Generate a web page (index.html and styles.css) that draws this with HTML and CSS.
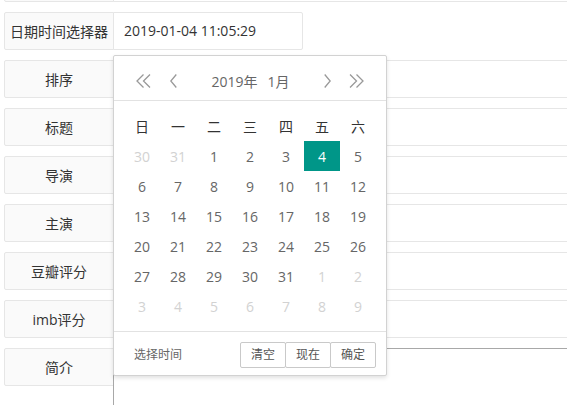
FILE: index.html
```html
<!DOCTYPE html>
<html lang="zh-CN">
<head>
<meta charset="utf-8">
<title>表单</title>
<link rel="stylesheet" href="styles.css">
</head>
<body>
<form class="form">
  <div class="item item-cut">
    <div class="label"></div>
    <div class="field field-wide"></div>
  </div>
  <div class="item">
    <div class="label">日期时间选择器</div>
    <div class="field field-date">2019-01-04 11:05:29
      <div class="picker">
        <div class="picker-head">
          <svg class="ico ico-dbl" width="17" height="14" viewBox="0 0 17 14"><polyline points="8.5,0.5 2,7 8.5,13.5"/><polyline points="15,0.5 8.5,7 15,13.5"/></svg>
          <svg class="ico ico-one" width="7" height="14" viewBox="0 0 7 14"><polyline points="6.3,0.5 0.8,7 6.3,13.5"/></svg>
          <div class="ym"><span>2019年</span><span>1月</span></div>
          <svg class="ico ico-one" width="7" height="14" viewBox="0 0 7 14"><polyline points="0.7,0.5 6.2,7 0.7,13.5"/></svg>
          <svg class="ico ico-dbl" width="17" height="14" viewBox="0 0 17 14"><polyline points="2,0.5 8.5,7 2,13.5"/><polyline points="8.5,0.5 15,7 8.5,13.5"/></svg>
        </div>
        <div class="picker-body">
          <div class="wk">日</div><div class="wk">一</div><div class="wk">二</div><div class="wk">三</div><div class="wk">四</div><div class="wk">五</div><div class="wk">六</div>
          <div class="d off">30</div><div class="d off">31</div><div class="d">1</div><div class="d">2</div><div class="d">3</div><div class="d on">4</div><div class="d">5</div>
          <div class="d">6</div><div class="d">7</div><div class="d">8</div><div class="d">9</div><div class="d">10</div><div class="d">11</div><div class="d">12</div>
          <div class="d">13</div><div class="d">14</div><div class="d">15</div><div class="d">16</div><div class="d">17</div><div class="d">18</div><div class="d">19</div>
          <div class="d">20</div><div class="d">21</div><div class="d">22</div><div class="d">23</div><div class="d">24</div><div class="d">25</div><div class="d">26</div>
          <div class="d">27</div><div class="d">28</div><div class="d">29</div><div class="d">30</div><div class="d">31</div><div class="d off">1</div><div class="d off">2</div>
          <div class="d off">3</div><div class="d off">4</div><div class="d off">5</div><div class="d off">6</div><div class="d off">7</div><div class="d off">8</div><div class="d off">9</div>
        </div>
        <div class="picker-foot">
          <span class="pick-time">选择时间</span>
          <div class="btns"><span class="btn">清空</span><span class="btn">现在</span><span class="btn">确定</span></div>
        </div>
      </div>
    </div>
  </div>
  <div class="item"><div class="label">排序</div><div class="field field-wide"></div></div>
  <div class="item"><div class="label">标题</div><div class="field field-wide"></div></div>
  <div class="item"><div class="label">导演</div><div class="field field-wide"></div></div>
  <div class="item"><div class="label">主演</div><div class="field field-wide"></div></div>
  <div class="item"><div class="label">豆瓣评分</div><div class="field field-wide"></div></div>
  <div class="item"><div class="label">imb评分</div><div class="field field-wide"></div></div>
  <div class="item item-area"><div class="label">简介</div><div class="field field-area"></div></div>
</form>
</body>
</html>
```
FILE: styles.css
```css
html, body {
  margin: 0;
  padding: 0;
  overflow: hidden;
  background: #fff;
}
body {
  padding-left: 4px;
  font-family: "Open Sans", "Noto Sans CJK SC", sans-serif;
  font-size: 14px;
  color: #333;
}
.form {
  display: flex;
  flex-direction: column;
  gap: 10px;
}
.item {
  display: flex;
  align-items: flex-start;
}
.item-cut {
  margin-top: -36px;
}
.label {
  box-sizing: border-box;
  width: 110px;
  flex: none;
  height: 38px;
  border: 1px solid #e6e6e6;
  border-radius: 2px 0 0 2px;
  background: #fafafa;
  display: flex;
  align-items: center;
  justify-content: center;
  white-space: nowrap;
  color: #333;
}
.field {
  box-sizing: border-box;
  height: 38px;
  margin-left: -1px;
  border: 1px solid #e6e6e6;
  border-radius: 0 2px 2px 0;
  background: #fff;
  padding-left: 10px;
  line-height: 36px;
  color: #333;
}
.field-date {
  position: relative;
  width: 190px;
  flex: none;
}
.field-wide {
  flex: 1;
  margin-right: -20px;
}
.field-area {
  flex: 1;
  margin-right: -20px;
  height: 100px;
  border-color: #a8a8a8;
}
.picker {
  position: absolute;
  top: 42px;
  left: -1px;
  z-index: 10;
  box-sizing: border-box;
  width: 274px;
  border: 1px solid #d2d2d2;
  border-radius: 2px;
  background: #fff;
  box-shadow: 0 2px 4px rgba(0, 0, 0, 0.12);
  line-height: normal;
}
.picker-head {
  display: flex;
  align-items: center;
  height: 45px;
  box-sizing: border-box;
  padding: 5px 21px 0;
  border-bottom: 1px solid #e2e2e2;
}
.ico {
  flex: none;
  fill: none;
  stroke: #999;
  stroke-width: 1.3;
}
.ico-dbl + .ico-one {
  margin-left: 18px;
}
.ico-one + .ico-dbl {
  margin-left: 17px;
}
.ym {
  flex: 1;
  display: flex;
  justify-content: center;
  gap: 10px;
  color: #666;
  font-size: 14px;
}
.picker-body {
  display: grid;
  grid-template-columns: repeat(7, 36px);
  grid-auto-rows: 30px;
  padding: 10px;
}
.wk, .d {
  display: flex;
  align-items: center;
  justify-content: center;
  font-size: 14px;
}
.wk {
  color: #333;
}
.d {
  color: #666;
}
.d.off {
  color: #d2d2d2;
}
.d.on {
  background: #009688;
  color: #fff;
}
.picker-foot {
  display: flex;
  align-items: flex-start;
  justify-content: space-between;
  height: 44px;
  box-sizing: border-box;
  padding: 10px 10px 0 20px;
  border-top: 1px solid #e2e2e2;
  font-size: 12px;
}
.pick-time {
  line-height: 26px;
  color: #666;
}
.btns {
  display: flex;
}
.btn {
  box-sizing: border-box;
  height: 26px;
  line-height: 24px;
  padding: 0 10px;
  margin-left: -1px;
  border: 1px solid #c9c9c9;
  border-radius: 2px;
  background: #fff;
  color: #555;
  white-space: nowrap;
}
```
